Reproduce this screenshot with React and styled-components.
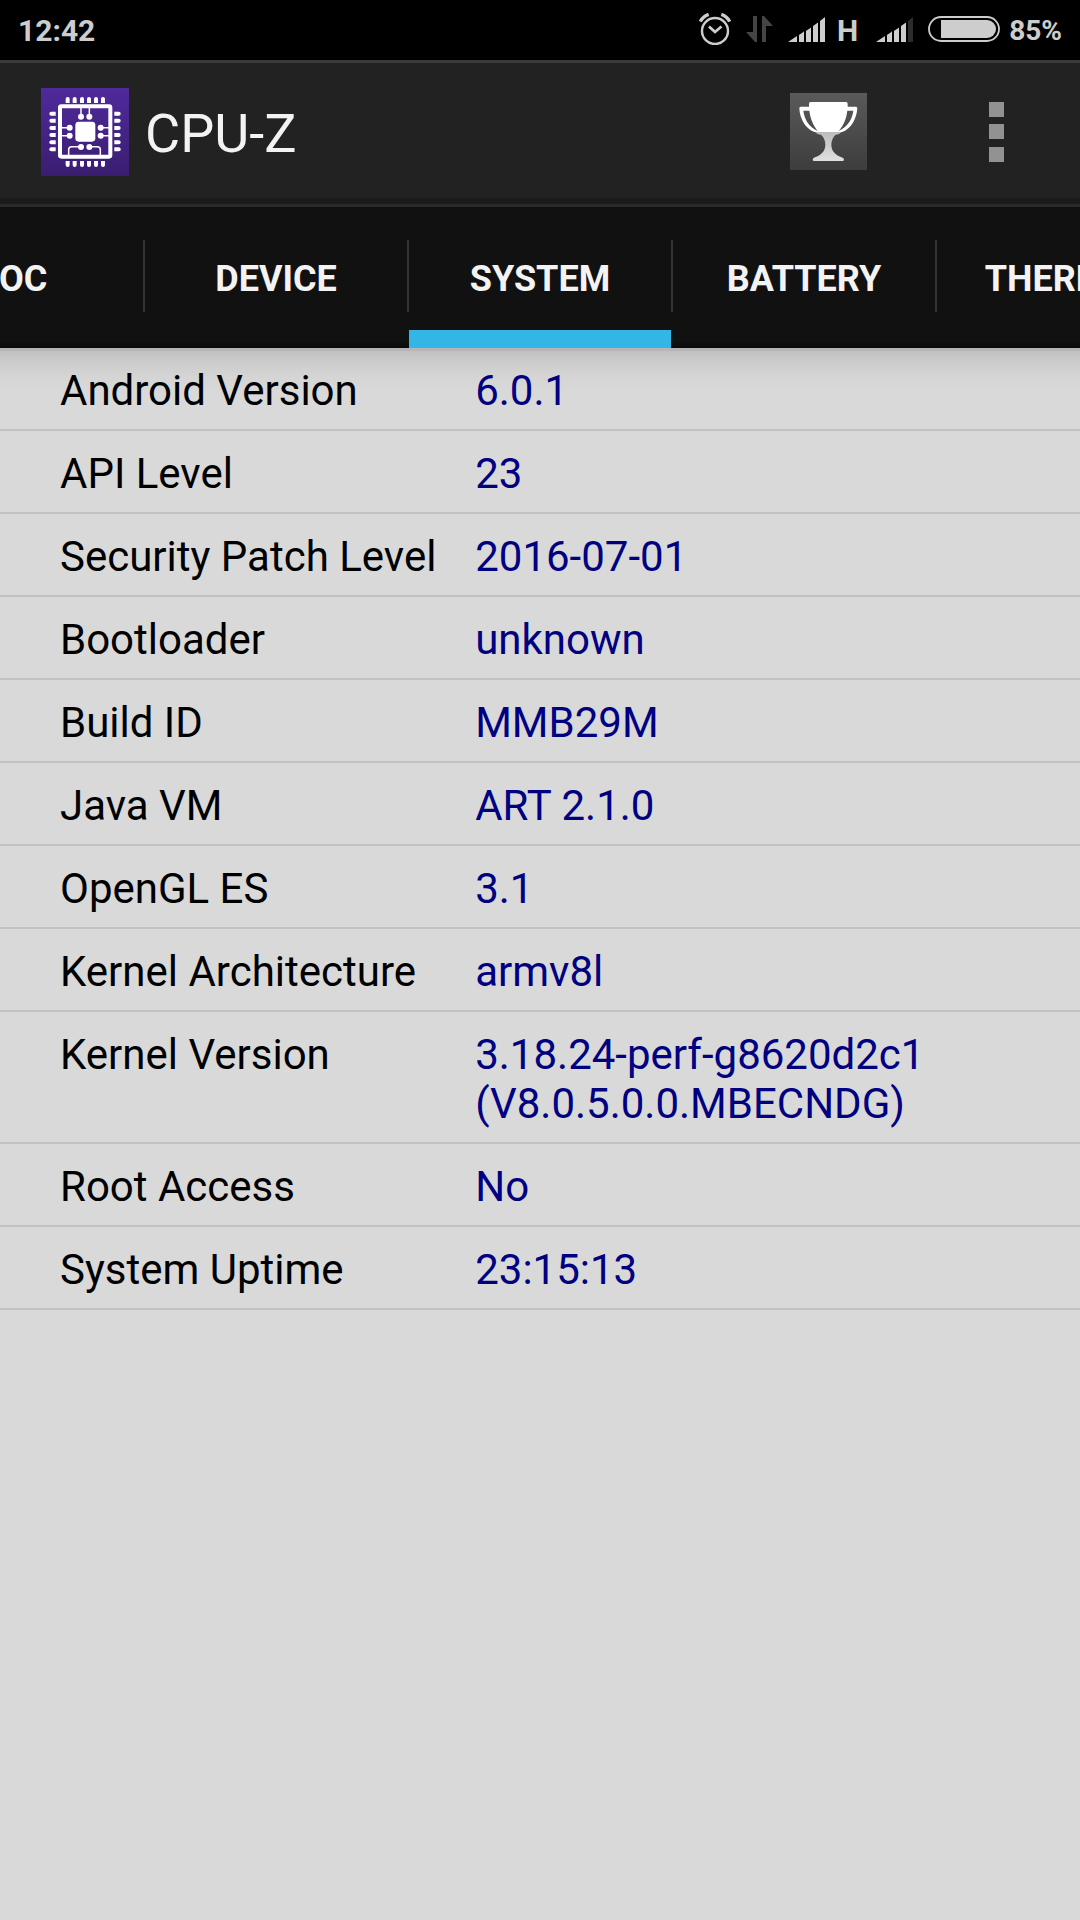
import { useState } from 'react';
import styled, { createGlobalStyle } from 'styled-components';

const GlobalStyle = createGlobalStyle`
	* {
		box-sizing: border-box;
	}

	html,
	body,
	#root {
		min-height: 100%;
	}

	body {
		margin: 0;
		background: #d9d9d9;
		font-family: Roboto, 'Liberation Sans', sans-serif;
		overflow-x: hidden;
	}
`;

const StatusBar = styled.div`
	display: flex;
	align-items: center;
	justify-content: space-between;
	height: 60px;
	padding: 2px 18px 0;
	background: #000;
	color: #cdcdcd;
	font-size: 30px;
	line-height: 36px;
	font-weight: 700;

	.icons {
		display: flex;
		align-items: center;
	}

	svg {
		display: block;
		margin-bottom: 4px;
	}

	.alarm {
		margin-right: 15px;
	}

	.arrows {
		margin-right: 15px;
	}

	.network {
		margin: 0 18px 0 12px;
	}

	.battery {
		margin: 0 9px 4px 15px;
	}

	.percent {
		font-size: 28px;
	}
`;

const Header = styled.header`
	display: flex;
	align-items: center;
	height: 147px;
	padding: 0 0 4px 41px;
	background: #222;
	border-top: 3px solid #3a3a3a;
	border-bottom: 3px solid #2a2a2a;
	box-shadow: inset 0 -6px 0 #1b1b1b;

	h1 {
		flex: 1;
		margin: 0 0 0 16px;
		padding-top: 4px;
		color: #f3f3f3;
		font-size: 54px;
		line-height: 64px;
		font-weight: 400;
	}
`;

const IconButton = styled.button`
	display: flex;
	align-items: center;
	justify-content: center;
	width: 168px;
	height: 96px;
	padding: 0;
	border: 0;
	background: none;
`;

const TabBar = styled.nav`
	display: flex;
	align-items: center;
	justify-content: center;
	height: 141px;
	overflow: hidden;
	background: linear-gradient(#111 134px, #0a0a0a 141px);
`;

const Divider = styled.span`
	flex: none;
	width: 2px;
	height: 72px;
	margin-bottom: 3px;
	background: #333;
`;

const Tab = styled.button`
	flex: none;
	width: 262px;
	height: 141px;
	padding: 18px 0 16px;
	border: 0;
	background: none;
	box-shadow: ${({ $active }) => ($active ? 'inset 0 -18px 0 #33b5e5' : 'none')};
	color: #f3f3f3;
	font-family: inherit;
	font-size: 36px;
	line-height: 42px;
	font-weight: 700;
	text-transform: uppercase;
`;

const Content = styled.main`
	background: linear-gradient(
		#b5b5b5 3px,
		#c1c1c1 3px,
		#cdcdcd 15px,
		#d5d5d5 30px,
		#d9d9d9 45px
	);
`;

const Table = styled.table`
	width: 100%;
	border-collapse: collapse;
	table-layout: fixed;
	font-size: 42px;
	line-height: 49px;

	th,
	td {
		padding: 18px 0 14px;
		border-bottom: 2px solid #c2c2c2;
		font-weight: 400;
		text-align: left;
		vertical-align: top;
	}

	th {
		width: 44%;
		padding-left: 60px;
		color: #000;
	}

	td {
		padding-right: 60px;
		color: #000080;
		white-space: pre-line;
	}
`;

const tabs = ['Soc', 'Device', 'System', 'Battery', 'Thermal'];

const rows = [
	{ title: 'Android Version', value: '6.0.1' },
	{ title: 'API Level', value: '23' },
	{ title: 'Security Patch Level', value: '2016-07-01' },
	{ title: 'Bootloader', value: 'unknown' },
	{ title: 'Build ID', value: 'MMB29M' },
	{ title: 'Java VM', value: 'ART 2.1.0' },
	{ title: 'OpenGL ES', value: '3.1' },
	{ title: 'Kernel Architecture', value: 'armv8l' },
	{ title: 'Kernel Version', value: '3.18.24-perf-g8620d2c1\n(V8.0.5.0.0.MBECNDG)' },
	{ title: 'Root Access', value: 'No' },
	{ title: 'System Uptime', value: '23:15:13' },
];

const AlarmIcon = () => (
	<svg className='alarm' width='32' height='32' viewBox='0 0 32 32' fill='none' stroke='#cdcdcd'>
		<circle cx='16' cy='18' r='13' strokeWidth='2.4' />
		<path d='M10 13.5l6 5.5 6.5-5.5' strokeWidth='2.8' />
		<path d='M1.3 8.6C3 5.2 6 2.6 9.7 1.4M30.7 8.6C29 5.2 26 2.6 22.3 1.4' strokeWidth='3.4' />
	</svg>
);

const ArrowsIcon = () => (
	<svg className='arrows' width='27' height='26' viewBox='0 0 27 26' fill='#444'>
		<path d='M7 0h4v26h-2L0 16h7zM16 26h4V10h7L18 0h-2z' />
	</svg>
);

const bars = ['M0 25L9 19V25z', 'M11 18L16 14.5V25H11z', 'M18 14L23 10.5V25H18z', 'M25 9L30 5.5V25H25z', 'M32 4L37 0V25H32z'];

const SignalIcon = ({ level }) => (
	<svg width='37' height='25' viewBox='0 0 37 25'>
		{bars.map((d, i) => (
			<path key={d} d={d} fill={i < level ? '#cdcdcd' : '#2c2c2c'} />
		))}
	</svg>
);

const BatteryIcon = () => (
	<svg className='battery' width='72' height='26' viewBox='0 0 72 26'>
		<rect x='1' y='1' width='70' height='24' rx='12' fill='none' stroke='#cdcdcd' strokeWidth='1.8' />
		<path d='M13 4h46a9 9 0 0 1 0 18H13z' fill='#cdcdcd' />
	</svg>
);

const Logo = () => {
	const across = [74, 95, 117, 138, 159, 180];
	const down = [71, 92, 114, 135, 157, 178];

	return (
		<svg width='88' height='88' viewBox='0 0 264 264'>
			<defs>
				<linearGradient id='logo' x1='0' y1='0' x2='0' y2='1'>
					<stop offset='0' stopColor='#4f2a9b' />
					<stop offset='1' stopColor='#3a1d70' />
				</linearGradient>
			</defs>
			<rect width='264' height='264' fill='url(#logo)' />
			<g fill='#fff'>
				{across.map((x) => (
					<g key={x}>
						<path d={`M${x} 45V33q0-6 6-6t6 6V45z`} />
						<path d={`M${x} 219v12q0 6 6 6t6-6v-12z`} />
					</g>
				))}
				{down.map((y) => (
					<g key={y}>
						<path d={`M44 ${y}H31q-6 0-6 6t6 6H44z`} />
						<path d={`M220 ${y}h13q6 0 6 6t-6 6h-13z`} />
					</g>
				))}
				<rect x='103' y='101' width='60' height='60' rx='10' />
				<circle cx='120' cy='86' r='9' />
				<circle cx='145' cy='86' r='9' />
				<circle cx='86' cy='119' r='9' />
				<circle cx='86' cy='143' r='9' />
				<circle cx='179' cy='119' r='9' />
				<circle cx='179' cy='143' r='9' />
				<circle cx='120' cy='177' r='9' />
				<circle cx='145' cy='177' r='9' />
			</g>
			<g fill='none' stroke='#fff'>
				<rect x='57' y='55' width='151' height='151' rx='4' strokeWidth='12' />
				<path
					d='M120 86V55M145 86V55M86 119H57M86 143H57M179 119h29M179 143h29M120 176H92q-9 0-9 9v21M145 176h24q9 0 9 9v21'
					strokeWidth='4.5'
				/>
			</g>
		</svg>
	);
};

const TrophyIcon = () => (
	<svg width='77' height='77' viewBox='0 0 231 231'>
		<defs>
			<linearGradient id='plate' x1='0' y1='0' x2='0' y2='1'>
				<stop offset='0' stopColor='#5a5a5a' />
				<stop offset='1' stopColor='#3d3d3d' />
			</linearGradient>
			<linearGradient id='stem' x1='0' y1='0' x2='0' y2='1'>
				<stop offset='0' stopColor='#bcbcbc' />
				<stop offset='1' stopColor='#e0e0e0' />
			</linearGradient>
		</defs>
		<rect width='231' height='231' fill='url(#plate)' />
		<path
			d='M75 117h80q-8 9-19 9-12 12-12 29c0 20 14 32 31 38q7 3 7 7 0 4-5 4H73q-5 0-5-4 0-4 7-7c17-6 31-18 31-38q0-17-12-29-11 0-19-9z'
			fill='url(#stem)'
		/>
		<path
			d='M57 41V32q0-5 5-5h106q5 0 5 5v9h25q4 0 4 5c-2 30-18 62-45 71H73C46 108 29 76 28 46q0-5 4-5zM58 53H40c3 25 16 48 43 61C67 93 61 75 58 53zM172 53c-3 22-9 42-26 61 27-13 41-36 44-61z'
			fill='#fff'
		/>
	</svg>
);

const DotsIcon = () => (
	<svg width='15' height='60' viewBox='0 0 15 60' fill='#929292'>
		<rect width='15' height='15' />
		<rect y='22' width='15' height='15' />
		<rect y='45' width='15' height='15' />
	</svg>
);

const App = () => {
	const [active, setActive] = useState('System');

	return (
		<>
			<GlobalStyle />
			<StatusBar>
				<span>12:42</span>
				<div className='icons'>
					<AlarmIcon />
					<ArrowsIcon />
					<SignalIcon level={5} />
					<span className='network'>H</span>
					<SignalIcon level={4} />
					<BatteryIcon />
					<span className='percent'>85%</span>
				</div>
			</StatusBar>
			<Header>
				<Logo />
				<h1>CPU-Z</h1>
				<IconButton aria-label='Ranking'>
					<TrophyIcon />
				</IconButton>
				<IconButton aria-label='More options'>
					<DotsIcon />
				</IconButton>
			</Header>
			<TabBar>
				{tabs.map((tab, i) => [
					i > 0 && <Divider key={`${tab}-divider`} />,
					<Tab key={tab} $active={tab === active} onClick={() => setActive(tab)}>
						{tab}
					</Tab>,
				])}
			</TabBar>
			<Content>
				<Table>
					<tbody>
						{rows.map(({ title, value }) => (
							<tr key={title}>
								<th scope='row'>{title}</th>
								<td>{value}</td>
							</tr>
						))}
					</tbody>
				</Table>
			</Content>
		</>
	);
};

export default App;
